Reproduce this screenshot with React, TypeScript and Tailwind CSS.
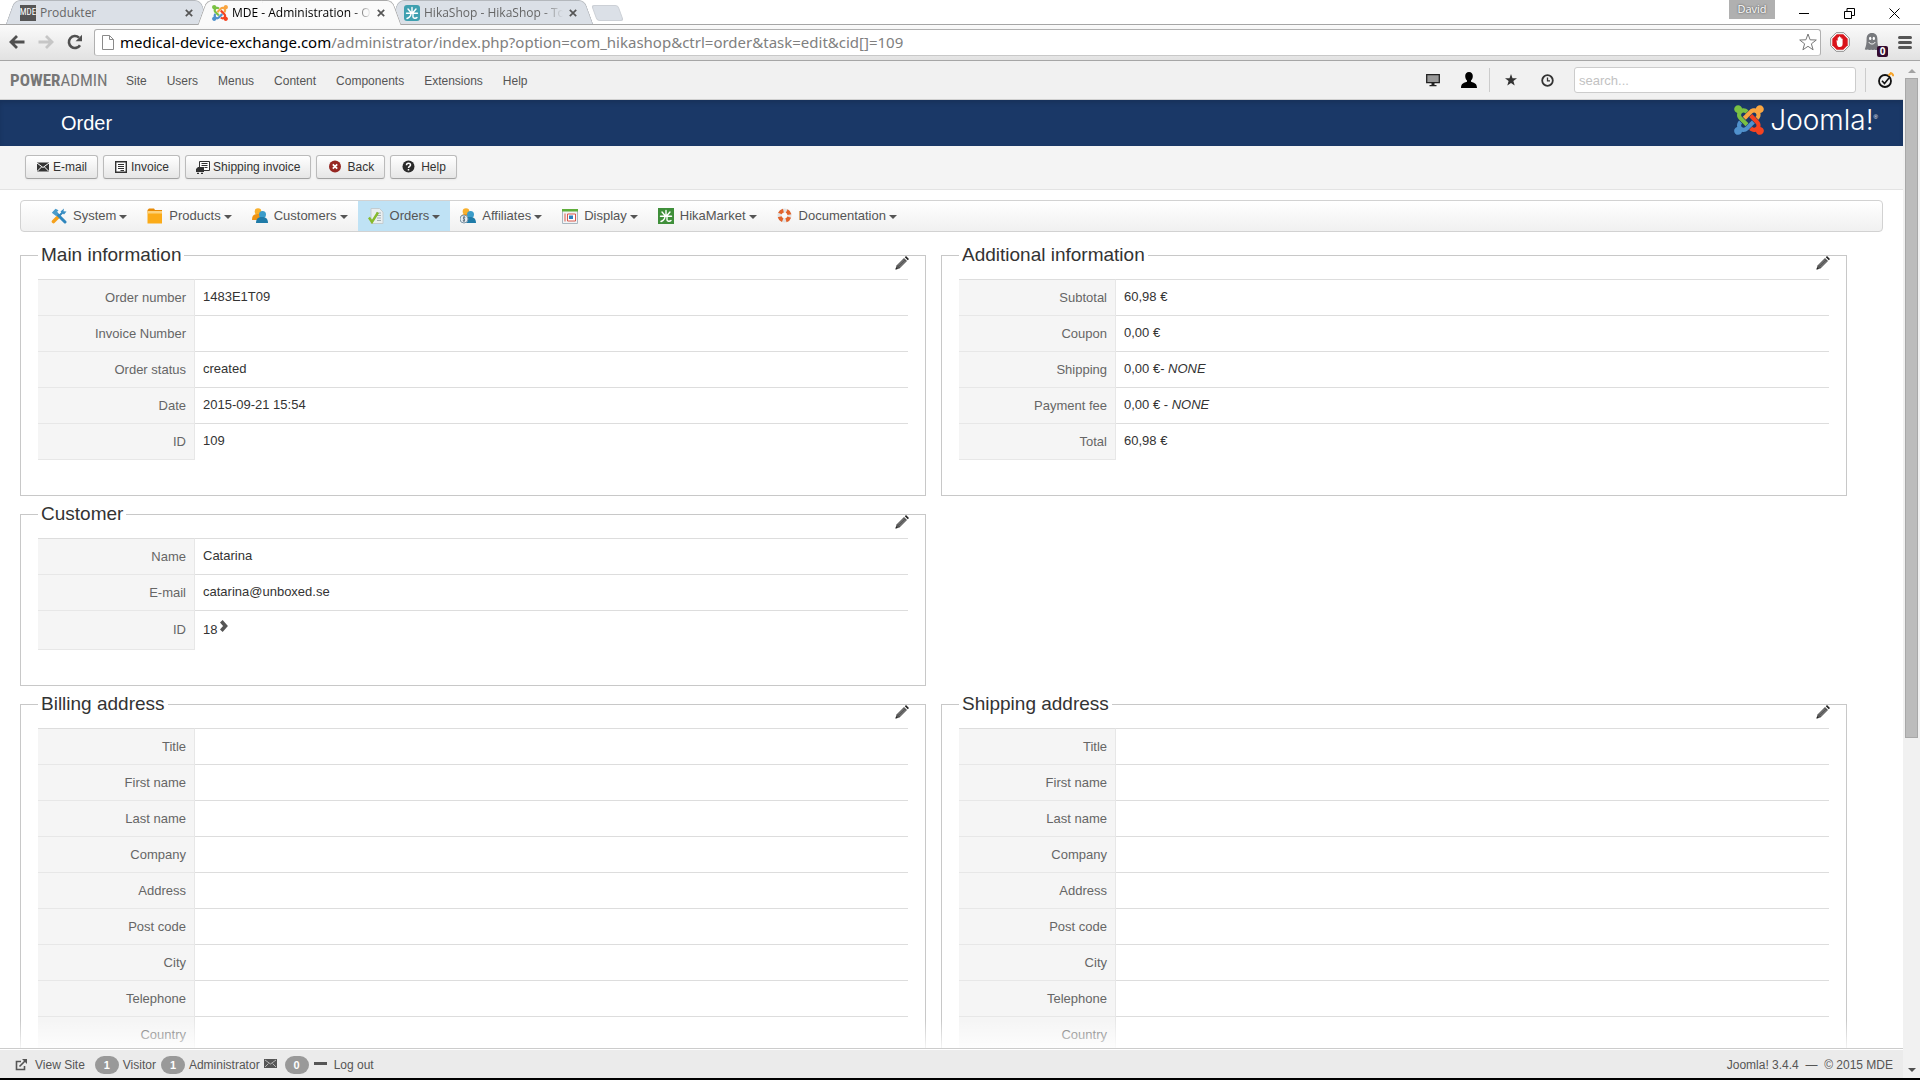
import React from 'react';
import { clsx } from 'clsx';

interface RowData {
  label: string;
  value?: React.ReactNode;
  tall?: boolean;
}

const mainInformation: RowData[] = [
  { label: 'Order number', value: '1483E1T09' },
  { label: 'Invoice Number' },
  { label: 'Order status', value: 'created' },
  { label: 'Date', value: '2015-09-21 15:54' },
  { label: 'ID', value: '109' },
];

const additionalInformation: RowData[] = [
  { label: 'Subtotal', value: '60,98 €' },
  { label: 'Coupon', value: '0,00 €' },
  { label: 'Shipping', value: <>0,00 €- <em>NONE</em></> },
  { label: 'Payment fee', value: <>0,00 € - <em>NONE</em></> },
  { label: 'Total', value: '60,98 €' },
];

const addressFields: RowData[] = [
  'Title',
  'First name',
  'Last name',
  'Company',
  'Address',
  'Post code',
  'City',
  'Telephone',
  'Country',
].map((label) => ({ label }));

/* ---------- Logos ---------- */

const JoomlaMark = ({ className }: { className: string }) => (
  <svg viewBox="0 30 448 452" className={className} aria-hidden="true">
    <path fill="#7ac143" d="M.6 92.1C.6 58.8 27.4 32 60.4 32c30 0 54.5 21.9 59.2 50.2 32.6-7.6 67.1.6 96.5 30l-44.3 44.3c-20.5-20.5-42.6-16.3-55.4-3.5-14.3 14.3-14.3 37.9 0 52.2l99.5 99.5-44 44.3c-87.7-87.2-49.7-49.7-99.8-99.7-26.8-26.5-35-64.8-24.8-98.9C20.4 144.6.6 120.7.6 92.1z" />
    <path fill="#f9a541" d="M130.1 208.5l44.3 44.3c10-10 89.7-89.7 99.7-99.8 14.3-14.3 37.6-14.3 51.9 0 12.8 12.8 17 35-3.5 55.4l44 44.3c31.2-31.2 38.5-67.6 28.9-101.2 29.2-4.1 51.9-29.2 51.9-59.5 0-33.2-26.8-60.1-59.8-60.1-30.3 0-55.4 22.5-59.5 51.6-33.8-9.9-71.7-1.5-98.3 25.1-18.3 19.1-71.1 71.5-99.6 99.9z" />
    <path fill="#f44321" d="M396.4 360.7c8.2-32.7-.9-68.5-26.3-93.9-11.8-12.2 5 4.7-99.5-99.7l-44.3 44.3 99.7 99.7c14.3 14.3 14.3 37.6 0 51.9-12.8 12.8-35 17-55.4-3.5l-44 44.3c27.6 30.2 68 38.8 102.7 28 5.5 27.4 29.7 48.1 58.9 48.1 33 0 59.8-26.8 59.8-60.1 0-30.2-22.5-55-51.6-59.1z" />
    <path fill="#5091cd" d="M312.1 307.6l-44-44.3c-87 86.4-50.4 50.4-99.7 99.8-14.3 14.3-37.6 14.3-51.9 0-13.1-13.4-16.9-35.3 3.2-55.4l-44-44.3c-30.2 30.2-38 65.2-29.5 98.3-26.7 6-46.2 29.9-46.2 58.2C0 453.2 26.8 480 59.8 480c28.6 0 52.5-19.8 58.6-46.7 32.7 8.2 68.5-.6 94.2-26 32.1-32 12.2-12.4 99.5-99.7z" />
  </svg>
);

const HikaMark = ({ color, rounded }: { color: string; rounded?: boolean }) => (
  <svg viewBox="0 0 16 16" className="h-4 w-4 shrink-0" aria-hidden="true">
    <rect width="16" height="16" rx={rounded ? 3 : 0} fill={color} />
    <path
      d="M8 2.500v5M4 4l3 3.500M12 4L9 7.500M2.500 8.200h11M7 8.500c0 2.500-1.500 4-4 5M9 8.500v3.500c0 1.500 3 1.500 4 .5"
      stroke="#fff"
      strokeWidth="1.400"
      fill="none"
      strokeLinecap="round"
    />
  </svg>
);

/* ---------- Browser chrome ---------- */

interface TabProps {
  title: string;
  icon: React.ReactNode;
  active?: boolean;
  fade?: boolean;
}

const BrowserTab: React.FC<TabProps> = ({ title, icon, active, fade }) => (
  <div
    className={clsx(
      'relative -mr-[11px] flex h-6 w-[203px] items-center pr-4 pl-3.5 pt-px',
      "before:absolute before:inset-y-0 before:right-1/3 before:left-1 before:-z-10 before:-skew-x-[20deg] before:rounded-tl-md before:border-t before:border-l before:content-['']",
      "after:absolute after:inset-y-0 after:right-1 after:left-1/3 after:-z-10 after:skew-x-[20deg] after:rounded-tr-md after:border-t after:border-r after:content-['']",
      active
        ? 'z-10 h-[25px] text-black before:border-[#a9a9a9] before:bg-[#fafafa] after:border-[#a9a9a9] after:bg-[#fafafa]'
        : 'z-0 text-[#666] before:border-[#b4b8bd] before:bg-[#dbe0e7] after:border-[#b4b8bd] after:bg-[#dbe0e7]'
    )}
  >
    {icon}
    <span
      className={clsx(
        'ml-1 w-[142px] text-xs whitespace-nowrap',
        fade && '[mask-image:linear-gradient(to_right,#000_84%,transparent_98%)]'
      )}
    >
      {title}
    </span>
    <button type="button" aria-label={`Close ${title}`} className="ml-[3px]">
      <svg viewBox="0 0 8 8" className="h-2 w-2" stroke="#555" strokeWidth="1.700">
        <path d="M.8.8l6.400 6.400M7.200.8L.8 7.200" />
      </svg>
    </button>
  </div>
);

const WindowControls = () => (
  <div className="ml-auto flex items-start text-black">
    <span className="h-[19px] w-[46px] bg-[#b0b0b0] text-center text-[11px] leading-[18px] text-white [text-shadow:0_0_2px_#333]">
      David
    </span>
    <div className="flex gap-[34px] pt-2 pr-5 pl-6">
      <button type="button" aria-label="Minimize">
        <svg viewBox="0 0 11 11" className="h-[11px] w-[11px]" stroke="#000" fill="none">
          <path d="M0 5.500h10" />
        </svg>
      </button>
      <button type="button" aria-label="Restore">
        <svg viewBox="0 0 11 11" className="h-[11px] w-[11px]" stroke="#000" fill="none">
          <path d="M.5 3.500h7v7h-7zM3 3V.5h7.500v7H8" />
        </svg>
      </button>
      <button type="button" aria-label="Close window">
        <svg viewBox="0 0 11 11" className="h-[11px] w-[11px]" stroke="#000" fill="none">
          <path d="M.5.5l10 10M10.500.5l-10 10" />
        </svg>
      </button>
    </div>
  </div>
);

const BrowserChrome = () => (
  <div className="shrink-0 font-['Open_Sans','Noto_Sans',sans-serif]">
    <div className="relative isolate flex h-6 pl-1.5">
      <BrowserTab
        title="Produkter"
        icon={
          <span className="flex h-4 w-4 shrink-0 items-center justify-center bg-[#555] font-['Roboto_Condensed','Open_Sans_Condensed','Liberation_Sans',sans-serif] text-[9px] text-white">
            MDE
          </span>
        }
      />
      <BrowserTab active fade title="MDE - Administration - O" icon={<JoomlaMark className="h-4 w-4 shrink-0" />} />
      <BrowserTab fade title="HikaShop - HikaShop - To" icon={<HikaMark color="#3fa0b0" rounded />} />
      <button
        type="button"
        aria-label="New tab"
        className="mt-[5px] ml-3 h-4 w-[27px] skew-x-[20deg] rounded-[3px] border border-[#ccd0d6] bg-[#dbe0e7]"
      />
      <WindowControls />
    </div>
    <div className="flex h-[37px] items-center border-t border-b border-[#a6a6a6] bg-linear-to-b from-[#fafafa] to-[#e2e2e2] pr-2 pb-px">
      <div className="flex w-[94px] items-center gap-[13px] pl-[9px]">
        <button type="button" aria-label="Back">
          <svg viewBox="0 0 16 14" className="h-3.5 w-4" stroke="#505050" strokeWidth="2.800" fill="none">
            <path d="M15.500 7H2.500M8 1L2 7l6 6" />
          </svg>
        </button>
        <button type="button" aria-label="Forward">
          <svg viewBox="0 0 16 14" className="h-3.5 w-4" stroke="#c6c6c6" strokeWidth="2.800" fill="none">
            <path d="M.5 7h13M8 1l6 6-6 6" />
          </svg>
        </button>
        <button type="button" aria-label="Reload">
          <svg viewBox="0 0 16 16" className="h-4 w-4" fill="none">
            <path d="M13 11.200A6 6 0 1 1 12 3.600" stroke="#505050" strokeWidth="2.600" />
            <path d="M15 .8v6.400H8.600z" fill="#505050" />
          </svg>
        </button>
      </div>
      <div className="flex h-[27px] flex-1 items-center rounded-[3px] border border-[#b0b0b0] border-b-[#c8c8c8] bg-white pr-[3px] pl-[7px]">
        <svg viewBox="0 0 12 15" className="h-[15px] w-3" stroke="#8a8a8a" fill="#fff">
          <path d="M.5.5h7l4 4v10H.5zM7.500.5v4h4" />
        </svg>
        <p className="ml-1.5 flex-1 font-['Noto_Sans','Open_Sans',sans-serif] text-[15px] leading-5 text-[#808080]">
          <span className="text-black">medical-device-exchange.com</span>
          /administrator/index.php?option=com_hikashop&amp;ctrl=order&amp;task=edit&amp;cid[]=109
        </p>
        <button type="button" aria-label="Bookmark this page">
          <svg viewBox="0 0 18 18" className="h-[18px] w-[18px]" stroke="#777" fill="#fff" strokeLinejoin="round">
            <path d="M9 1l2.100 5.800 6.200.2-4.900 3.800 1.700 6L9 13.300l-5.100 3.500 1.700-6L.7 7l6.200-.2z" />
          </svg>
        </button>
      </div>
      <div className="flex items-center pl-[9px]">
        <button type="button" aria-label="Ad blocker">
          <svg viewBox="0 0 20 20" className="h-5 w-5">
            <path d="M6.200.7h7.600l5.500 5.500v7.600l-5.500 5.500H6.200L.7 13.800V6.200z" fill="#fff" stroke="#8a8a8a" />
            <path d="M6.700 2.300h6.600l4.400 4.400v6.600l-4.400 4.400H6.700l-4.400-4.400V6.700z" fill="#d9131b" />
            <path
              d="M6.500 8.500c.5-.6 1.200 0 1.200.6V5.800c0-.9 1.200-.9 1.200 0V5c0-.9 1.300-.9 1.300 0v.8c0-.9 1.200-.9 1.200 0V7c0-.8 1.200-.8 1.200 0v5c0 2-1 3-2.800 3-1.600 0-2.300-.8-2.800-2.300z"
              fill="#fff"
            />
          </svg>
        </button>
        <button type="button" aria-label="Ghost tracker" className="relative ml-3.5">
          <svg viewBox="0 0 16 20" className="h-[18px] w-4">
            <path d="M8 0C3.800 0 2 3 2 6.500c0 5-.5 8-2 11.500 1.500 1 2.500.8 3.500 0 1 1.300 2.500 1.300 3.500.2 1 1.100 2.500 1.100 3.500 0 1 1.100 3 1 5.500 0-1.500-3.500-2-6.700-2-11.700C14 3 12.200 0 8 0z" fill="#77797d" />
            <path d="M4.500 10c1 3 6 3 7 0" stroke="#fff" fill="none" />
            <ellipse cx="6" cy="6" rx="1.300" ry="1.900" fill="#fff" />
            <ellipse cx="10" cy="6" rx="1.300" ry="1.900" fill="#fff" />
          </svg>
          <span className="absolute -right-2 -bottom-1.5 h-[11px] w-[11px] rounded-xs bg-[#330b2f] text-center text-[10px] leading-[11px] font-bold text-white">
            0
          </span>
        </button>
        <button type="button" aria-label="Browser menu" className="ml-[18px] flex w-3.5 flex-col gap-[2px]">
          <span className="h-[3px] rounded-xs bg-[#555]" />
          <span className="h-[3px] rounded-xs bg-[#555]" />
          <span className="h-[3px] rounded-xs bg-[#555]" />
        </button>
      </div>
    </div>
  </div>
);

/* ---------- Admin header ---------- */

const adminMenu = ['Site', 'Users', 'Menus', 'Content', 'Components', 'Extensions', 'Help'];

const AdminBar = () => (
  <header className="flex h-[39px] items-center border-b border-[#d0d0d0] bg-[#f1f1f1] pr-[9px] pl-2.5">
    <a href="#home" className="w-[116px] font-['Roboto_Condensed','Open_Sans_Condensed','Liberation_Sans',sans-serif] text-[17px] leading-5 text-[#777]">
      <b>POWER</b>ADMIN
    </a>
    <nav className="mt-0.5 flex gap-5 text-xs text-[#555]">
      {adminMenu.map((item) => (
        <a key={item} href={`#${item.toLowerCase()}`}>
          {item}
        </a>
      ))}
    </nav>
    <div className="ml-auto flex h-6 items-center">
      <button type="button" aria-label="Preview site">
        <svg viewBox="0 0 14 13" className="h-[13px] w-3.5">
          <path d="M.7.7h12.600v8H.7z" fill="#999" stroke="#222" strokeWidth="1.300" />
          <path d="M5.500 9h3v2h2v1.300h-7V11h2z" fill="#222" />
        </svg>
      </button>
      <button type="button" aria-label="Profile" className="ml-[21px]">
        <svg viewBox="0 0 16 16" className="h-4 w-4">
          <path d="M8 0c2.500 0 3.800 1.700 3.800 4 0 2-.8 3.600-1.800 4.500v1.200c2.500 1 6 1.300 6 6.300H0c0-5 3.500-5.300 6-6.300V8.500C5 7.600 4.200 6 4.200 4 4.200 1.700 5.500 0 8 0z" fill="#000" />
        </svg>
      </button>
      <span className="ml-3 h-6 w-px bg-[#ccc]" />
      <button type="button" aria-label="Favorites" className="ml-[15px]">
        <svg viewBox="0 0 12 12" className="h-3 w-3">
          <path d="M6 0l1.500 4.300H12L8.400 7l1.300 4.600L6 8.900l-3.700 2.700L3.600 7 0 4.300h4.500z" fill="#333" />
        </svg>
      </button>
      <button type="button" aria-label="History" className="ml-6">
        <svg viewBox="0 0 13 13" className="h-[13px] w-[13px]" fill="none" stroke="#333">
          <circle cx="6.500" cy="6.500" r="5.300" strokeWidth="1.800" />
          <path d="M6.500 3.500v3.300H9" strokeWidth="1.300" />
        </svg>
      </button>
      <input
        type="search"
        aria-label="Search"
        placeholder="search..."
        className="ml-5 h-[26px] w-[282px] rounded-[3px] border border-[#ccc] bg-white px-1 text-[13px] placeholder:text-[#c2c2c2]"
      />
      <span className="ml-[9px] h-6 w-px bg-[#ccc]" />
      <button type="button" aria-label="Quick check" className="ml-3">
        <svg viewBox="0 0 16 16" className="h-4 w-4" fill="none">
          <circle cx="7" cy="9" r="6" stroke="#111" strokeWidth="1.800" />
          <path d="M4 8.800l2.500 2.700L11 6" stroke="#111" strokeWidth="1.600" />
          <path d="M10.500 3.500l2-2M12 .8c2 .4 3.100 1.500 3.300 3.400" stroke="#f7a52b" strokeWidth="2" />
        </svg>
      </button>
    </div>
  </header>
);

const TitleBar = () => (
  <div className="flex h-[46px] items-center justify-between bg-[#1a3867] pr-[25px] pl-[61px] text-white shadow-[inset_0_3px_4px_rgba(0,0,0,0.12)]">
    <h1 className="text-xl leading-6">Order</h1>
    <div className="mb-1.5 flex items-center gap-1.5">
      <JoomlaMark className="h-[30px] w-[30px]" />
      <span className="font-['Inter',sans-serif] text-[28px] leading-7 font-light">Joomla!</span>
      <sup className="-ml-1.5 text-[6px]">®</sup>
    </div>
  </div>
);

/* ---------- Toolbar ---------- */

const ToolbarButton: React.FC<{ label: string; wide?: boolean; children: React.ReactNode }> = ({ label, wide, children }) => (
  <button
    type="button"
    className={clsx(
      'flex h-6 items-center rounded-[3px] border border-[#bbb] border-b-[#a2a2a2] bg-linear-to-b from-white to-[#e6e6e6] px-2.5 text-xs text-[#333] shadow-xs',
      wide ? 'gap-1.5' : 'gap-[3px]'
    )}
  >
    <svg viewBox="0 0 14 14" className="h-3.5 w-3.5" aria-hidden="true">
      {children}
    </svg>
    {label}
  </button>
);

const Toolbar = () => (
  <div className="flex h-11 items-center gap-[5px] border-b border-[#e3e3e3] bg-[#f4f4f4] pb-px pl-[25px]">
    <ToolbarButton label="E-mail">
      <path d="M1 2.500h12v9H1z" fill="#333" />
      <path d="M1 3l6 4.500L13 3M1 11.500L5.500 7M13 11.500L8.500 7" stroke="#fff" fill="none" />
    </ToolbarButton>
    <ToolbarButton label="Invoice">
      <path d="M1.700 1.700h10.600v10.600H1.700z" fill="#fff" stroke="#333" strokeWidth="1.400" />
      <path d="M4 4.500h6M4 6.500h6M4 8.500h6M6.500 10.500H10" stroke="#333" />
    </ToolbarButton>
    <ToolbarButton label="Shipping invoice">
      <path d="M3.500 1.500h10v9h-10z" fill="#fff" stroke="#333" />
      <path d="M5.500 3.500h6M5.500 5.500h6M8.500 7.500h3" stroke="#333" />
      <path d="M0 9l2-2h6v5H0z" fill="#333" />
      <path d="M1 13.300h2M5 13.300h2" stroke="#333" strokeWidth="1.300" />
    </ToolbarButton>
    <ToolbarButton label="Back" wide>
      <circle cx="8" cy="6.500" r="6" fill="#962722" />
      <path d="M5.800 4.300l4.400 4.400M10.200 4.300L5.800 8.700" stroke="#fff" strokeWidth="1.700" />
    </ToolbarButton>
    <ToolbarButton label="Help" wide>
      <circle cx="7.500" cy="6.500" r="6" fill="#2b2b2b" />
      <path d="M5.500 5.200c0-2.700 4-2.500 4-.2 0 1.300-2 1.400-2 2.900M7.500 9v1.500" stroke="#fff" strokeWidth="1.500" fill="none" />
    </ToolbarButton>
  </div>
);

/* ---------- Shop menu ---------- */

const People = () => (
  <>
    <circle cx="6" cy="3.500" r="3.300" fill="#f9b02c" />
    <path d="M0 12c0-4 1.500-6 5.500-6s5 2 5 6z" fill="#ef9312" />
    <circle cx="10.500" cy="6.500" r="3.500" fill="#3b9cc9" />
    <path d="M4 15c0-4.500 2.500-6 6-6s6 1.500 6 6z" fill="#1f7ba8" />
  </>
);

const shopMenu: { label: string; active?: boolean; icon: React.ReactNode }[] = [
  {
    label: 'System',
    icon: (
      <>
        <path d="M2.500 13.500L7 9" stroke="#f5a11c" strokeWidth="3.600" strokeLinecap="round" />
        <path d="M7.500 8.500L12 4" stroke="#2f86bd" strokeWidth="2" />
        <path d="M4 4l10 10" stroke="#2f86bd" strokeWidth="3" strokeLinecap="round" />
        <path d="M.8 4.800L4.500.8l3 1.500L6 4l1.200 2.200L5 8z" fill="#4a9ccc" />
        <path d="M9.500 3.500L13 .5l-.5 2.800 3 .2-2.500 3z" fill="#3b8fc4" />
      </>
    ),
  },
  {
    label: 'Products',
    icon: (
      <>
        <path d="M.5 2L2 .5h5L8 2h7v3H.5z" fill="#e88a05" />
        <path d="M.5 5h14.500v10.500H.5z" fill="#fbab18" />
        <path d="M.5 3h14.500v2.500H.5z" fill="#fdd27a" />
      </>
    ),
  },
  { label: 'Customers', icon: <People /> },
  {
    label: 'Orders',
    active: true,
    icon: (
      <>
        <path d="M3 .5h8.500L15 4v11.500H3z" fill="#e9eef0" stroke="#c3ccd0" />
        <path d="M8 5h5M9 7.500h4M9 10h4M9 12.500h4" stroke="#a4adb2" />
        <path d="M1 9.500l3 4.500 6-9.500" stroke="#86bb2c" strokeWidth="2.400" fill="none" />
      </>
    ),
  },
  {
    label: 'Affiliates',
    icon: (
      <>
        <People />
        <circle cx="4" cy="11" r="4" fill="#e6edf2" stroke="#7d96a8" />
        <path d="M5.300 9.500c-1.500-1-2.800.5-1.300 1.500s.5 2.500-1.200 1.500M4 8v6" stroke="#456" strokeWidth=".8" fill="none" />
      </>
    ),
  },
  {
    label: 'Display',
    icon: (
      <>
        <path d="M.5 1.500h15v14H.5z" fill="#f1f4f6" stroke="#a9b7c0" />
        <path d="M0 1h16v2.500H0z" fill="#5fae3a" />
        <path d="M2 5.500h2v8H2z" fill="#e6a7a0" />
        <path d="M5.500 6h8v7h-8z" fill="#fff" stroke="#d8564a" />
        <path d="M7 7.500h4V11H7z" fill="#2f7fc0" />
      </>
    ),
  },
  { label: 'HikaMarket', icon: <HikaMark color="#3f8f3a" /> },
  {
    label: 'Documentation',
    icon: (
      <>
        <circle cx="7.500" cy="7.500" r="5" stroke="#e2e2e2" strokeWidth="4" fill="none" />
        <circle cx="7.500" cy="7.500" r="5" stroke="#e2622a" strokeWidth="4" fill="none" strokeDasharray="4.400 3.454" strokeDashoffset="-1.700" />
      </>
    ),
  },
];

const ShopMenu = () => (
  <nav className="mt-2.5 flex h-8 rounded border border-[#d2d2d2] bg-linear-to-b from-white to-[#f0f0f0] pl-5 text-[13px] text-[#555]">
    {shopMenu.map(({ label, icon, active }) => (
      <button key={label} type="button" className={clsx('flex items-center px-2.5', active && 'bg-[#bfe2f5]')}>
        <svg viewBox="0 0 16 16" className="mr-1.5 h-4 w-4" fill="none" aria-hidden="true">
          {icon}
        </svg>
        {label}
        <span className="mt-0.5 ml-[3px] border-x-4 border-t-4 border-x-transparent border-t-[#555]" />
      </button>
    ))}
  </nav>
);

/* ---------- Order panels ---------- */

interface PanelProps {
  title: string;
  rows: RowData[];
  className?: string;
}

const Panel: React.FC<PanelProps> = ({ title, rows, className }) => (
  <div className={clsx('relative', className)}>
    <fieldset className="border border-[#c8c8c8] px-[17px] pb-[35px]">
      <legend className="px-[3px] text-[19px] leading-9 text-[#333]">{title}</legend>
      <table className="mt-1.5 w-full border-separate border-spacing-0 text-[13px] leading-5">
        <tbody>
          {rows.map(({ label, value, tall }) => (
            <tr key={label} className={clsx('group', tall ? 'h-10' : 'h-9 last:h-[37px]')}>
              <th
                scope="row"
                className="w-[157px] border-t border-r border-[#e7e7e7] bg-[#f5f5f5] pr-2 text-right font-normal text-[#666] group-first:border-t-[#ddd] group-last:border-b"
              >
                {label}
              </th>
              <td className="border-t border-[#ddd] pb-0.5 pl-2 text-[#333]">{value}</td>
            </tr>
          ))}
        </tbody>
      </table>
    </fieldset>
    <button type="button" aria-label={`Edit ${title}`} className="absolute top-[19px] right-[17px]">
      <svg viewBox="0 0 14 14" className="h-3.5 w-3.5">
        <path d="M.5 13.500l1-4L9 2l3 3-7.500 7.500z" fill="#555" />
        <path d="M3 9.500l6-6M4.500 11l6-6" stroke="#999" strokeWidth=".7" />
        <path d="M9.800 1.200L11 0l3 3-1.200 1.200zM.5 13.500l.6-2.300 1.700 1.700z" fill="#222" />
      </svg>
    </button>
  </div>
);

const customer: RowData[] = [
  { label: 'Name', value: 'Catarina' },
  { label: 'E-mail', value: 'catarina@unboxed.se' },
  {
    label: 'ID',
    tall: true,
    value: (
      <span className="flex">
        18
        <a href="#customer" aria-label="Open customer" className="ml-[3px]">
          <svg viewBox="0 0 8 12" className="h-3 w-2" fill="none" stroke="#555" strokeWidth="3.600">
            <path d="M1.300 1.300L5.500 6l-4.200 4.700" />
          </svg>
        </a>
      </span>
    ),
  },
];

/* ---------- Footer ---------- */

const Badge = ({ children }: { children: React.ReactNode }) => (
  <span className="h-[18px] w-6 rounded-full bg-[#999] text-center text-[11px] leading-[18px] font-bold text-white">{children}</span>
);

const StatusBar = () => (
  <footer className="flex h-[30px] shrink-0 items-center border-t border-[#ccc] bg-[#ebebeb] pt-0.5 pr-2.5 pl-[15px] text-xs text-[#555] shadow-[inset_0_1px_0_#fff]">
    <a href="#site" className="flex items-center gap-2">
      <svg viewBox="0 0 12 12" className="h-3 w-3" fill="none" stroke="#555" strokeWidth="1.600">
        <path d="M6 2.500H1.500v8h8V7M4.500 7.500L10 2" />
        <path d="M7 0h5v5z" fill="#555" stroke="none" />
      </svg>
      View Site
    </a>
    <span className="ml-2.5 flex items-center gap-1">
      <Badge>1</Badge> Visitor
    </span>
    <span className="ml-[5px] flex items-center gap-1">
      <Badge>1</Badge> Administrator
    </span>
    <a href="#messages" className="ml-1 flex items-center gap-2">
      <svg viewBox="0 0 13 9" className="mb-0.5 h-[9px] w-[13px]">
        <path d="M0 0h13v9H0z" fill="#555" />
        <path d="M1 1l5.500 4L12 1M1 8l3.500-3.500M12 8L8.500 4.500" stroke="#ccc" strokeWidth=".8" fill="none" />
      </svg>
      <Badge>0</Badge>
    </a>
    <a href="#logout" className="ml-[5px] flex items-center gap-[7px]">
      <span className="mb-0.5 h-[3px] w-[13px] bg-[#555]" />
      Log out
    </a>
    <p className="ml-auto whitespace-pre">Joomla! 3.4.4{'  '}—{'  '}© 2015 MDE</p>
  </footer>
);

const Scrollbar = () => (
  <div className="flex w-[17px] shrink-0 flex-col items-center bg-[#f1f1f1] py-1.5">
    <span className="mt-0.5 border-x-4 border-b-4 border-x-transparent border-b-[#a3a3a3]" />
    <div className="mt-[5px] w-full flex-1 px-0.5">
      <div className="h-2/3 border border-[#a8a8a8] bg-[#bcbcbc]" />
    </div>
    <span className="border-x-4 border-t-4 border-x-transparent border-t-[#505050]" />
  </div>
);

export default function App() {
  return (
    <div className="flex h-screen flex-col overflow-hidden border-b-2 border-black bg-white font-['Liberation_Sans',Arial,sans-serif]">
      <BrowserChrome />
      <div className="flex min-h-0 flex-1">
        <div className="flex min-w-0 flex-1 flex-col">
          <AdminBar />
          <main className="relative min-h-0 flex-1 overflow-hidden">
            <TitleBar />
            <Toolbar />
            <div className="px-5">
              <ShopMenu />
              <div className="mt-[5px] grid grid-cols-2 gap-x-[15px] pr-9">
                <Panel title="Main information" rows={mainInformation} />
                <Panel title="Additional information" rows={additionalInformation} />
                <Panel title="Customer" rows={customer} />
                <Panel title="Billing address" rows={addressFields} className="col-start-1" />
                <Panel title="Shipping address" rows={addressFields} />
              </div>
            </div>
            {/* Fade the content out above the status bar */}
            <div className="pointer-events-none absolute inset-x-0 bottom-0 h-7 bg-linear-to-b from-transparent to-white/80" />
          </main>
          <StatusBar />
        </div>
        <Scrollbar />
      </div>
    </div>
  );
}
